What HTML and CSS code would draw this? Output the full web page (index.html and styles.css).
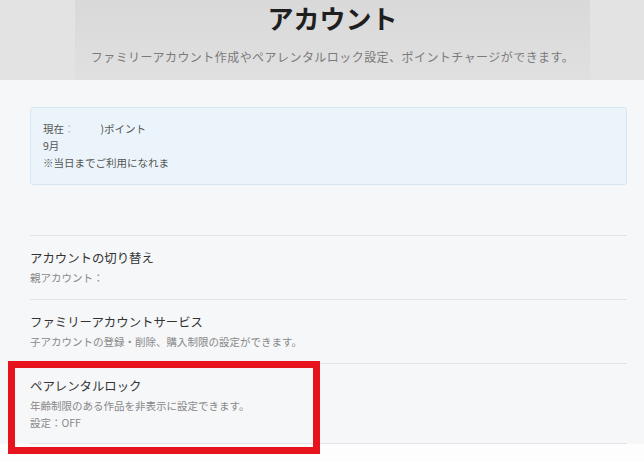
FILE: index.html
```html
<!DOCTYPE html>
<html lang="ja">

<head>
    <meta charset="UTF-8">
    <title>アカウント</title>
    <link rel="stylesheet" href="styles.css">
</head>

<body>
    <div class="pageHeader">
        <div class="headerInner">
            <h1 class="pageTitle">アカウント</h1>
            <p class="pageLead">ファミリーアカウント作成やペアレンタルロック設定、ポイントチャージができます。</p>
        </div>
    </div>

    <div class="content">
        <div class="pointBox">
            <div class="pointLine">現在<span class="colon">：</span><span class="masked"></span>)ポイント</div>
            <div class="pointLine">9月</div>
            <div class="pointLine">※当日までご利用になれま</div>
        </div>

        <ul class="menuList">
            <li class="menuItem">
                <div class="menuTitle">アカウントの切り替え</div>
                <div class="menuSub">親アカウント：</div>
            </li>
            <li class="menuItem">
                <div class="menuTitle">ファミリーアカウントサービス</div>
                <div class="menuSub">子アカウントの登録・削除、購入制限の設定ができます。</div>
            </li>
            <li class="menuItem">
                <div class="menuTitle">ペアレンタルロック</div>
                <div class="menuSub">年齢制限のある作品を非表示に設定できます。</div>
                <div class="menuState">設定：OFF</div>
                <!-- 注目枠 -->
                <div class="highlight"></div>
            </li>
        </ul>
    </div>
</body>

</html>
```

FILE: styles.css
```css
html {
    background-color: #fdfdfd;
}

body {
    margin: 0;
    min-height: 462px;
    font-family: "Noto Sans CJK JP", "Noto Sans", sans-serif;
    color: #333;
}

.pageHeader {
    height: 80px;
    background-color: #e3e3e3;
    display: flex;
}

.headerInner {
    width: 515px;
    margin-left: 75px;
    background: linear-gradient(#d9d9da, #e0e0e1);
    text-align: center;
}

.pageTitle {
    margin: 0;
    font-size: 26px;
    line-height: 36px;
    font-weight: bold;
    color: #1f1f1f;
}

.pageLead {
    margin: 12px 0 0;
    font-size: 12px;
    letter-spacing: 0.45px;
    line-height: 18px;
    color: #7a7a7a;
}

.content {
    padding: 27px 17px 0 30px;
    background-color: #f6f7f9;
}

.pointBox {
    height: 78px;
    box-sizing: border-box;
    padding: 12px 12px 0;
    background-color: #eaf4fa;
    border: 1px solid #d5e6f0;
    border-radius: 3px;
}

.pointLine {
    font-size: 10.5px;
    line-height: 17px;
    color: #555;
}

.colon {
    color: #bbb;
}

.masked {
    display: inline-block;
    width: 26px;
}

.menuList {
    list-style: none;
    margin: 50px 0 0;
    padding: 0;
}

.menuItem {
    position: relative;
    border-top: 1px solid #e1e3e6;
    padding: 11px 0 12px;
}

.menuItem:last-child {
    border-bottom: 1px solid #e1e3e6;
}

.menuTitle {
    font-size: 12.4px;
    line-height: 22px;
    color: #333;
}

.menuSub {
    font-size: 10.5px;
    line-height: 18px;
    color: #888;
}

.menuState {
    font-size: 10.5px;
    line-height: 16px;
    color: #888;
}

.highlight {
    position: absolute;
    left: -22px;
    top: -3px;
    width: 312px;
    height: 93px;
    box-sizing: border-box;
    border: 7px solid #e8141d;
}
```
